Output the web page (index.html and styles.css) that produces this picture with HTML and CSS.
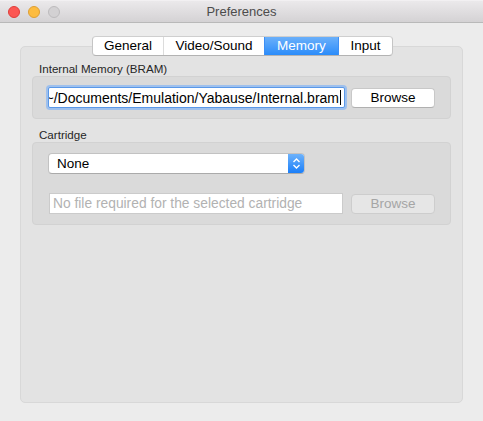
FILE: index.html
```html
<!DOCTYPE html>
<html>
<head>
<meta charset="utf-8">
<title>Preferences</title>
<link rel="stylesheet" href="styles.css">
</head>
<body>
<div class="window">
  <div class="titlebar">
    <div class="lights">
      <span class="light close"></span>
      <span class="light minimize"></span>
      <span class="light zoom"></span>
    </div>
    <div class="title">Preferences</div>
  </div>

  <div class="body">
    <div class="tabs">
      <div class="tab t-general">General</div>
      <div class="tab t-video">Video/Sound</div>
      <div class="tab t-memory active">Memory</div>
      <div class="tab t-input">Input</div>
    </div>

    <div class="panel">
      <div class="group-label">Internal Memory (BRAM)</div>
      <div class="group group-bram">
        <div class="field focused">
          <div class="field-scroll"><span>~/Documents/Emulation/Yabause/Internal.bram</span><span class="caret"></span></div>
        </div>
        <button class="btn">Browse</button>
      </div>

      <div class="group-label">Cartridge</div>
      <div class="group group-cart">
        <div class="popup">
          <span class="popup-value">None</span>
          <span class="popup-arrows">
            <svg width="9" height="13" viewBox="0 0 9 13"><path d="M1.5 5 L4.5 2 L7.5 5 M1.5 8 L4.5 11 L7.5 8" fill="none" stroke="#fff" stroke-width="1.4"/></svg>
          </span>
        </div>
        <div class="row">
          <div class="field disabled"><span class="placeholder">No file required for the selected cartridge</span></div>
          <button class="btn" disabled>Browse</button>
        </div>
      </div>
    </div>
  </div>
</div>
</body>
</html>
```

FILE: styles.css
```css
* { box-sizing: border-box; }

html, body {
  margin: 0;
  padding: 0;
}

body {
  width: 483px;
  height: 421px;
  overflow: hidden;
  background: #ececec;
  font-family: "Liberation Sans", Arial, sans-serif;
  color: #000;
}

.window {
  width: 483px;
  height: 421px;
  background: #ececec;
  display: flex;
  flex-direction: column;
}

/* title bar */
.titlebar {
  height: 23px;
  flex: none;
  display: flex;
  align-items: center;
  position: relative;
  background: linear-gradient(#ebe9eb, #d4d2d4);
  border-top: 1px solid #f2f0f2;
  border-bottom: 1px solid #b9b9b9;
}

.lights {
  display: flex;
  gap: 8px;
  padding-left: 8px;
  align-items: center;
}

.light {
  width: 12px;
  height: 12px;
  border-radius: 50%;
  display: block;
}

.close { background: #fc5753; border: 1px solid #df3e3a; }
.minimize { background: #fdbc40; border: 1px solid #de9f34; }
.zoom { background: #d3d1d3; border: 1px solid #bdbbbd; }

.title {
  position: absolute;
  left: 0;
  right: 0;
  top: 3px;
  text-align: center;
  font-size: 13px;
  color: #4c4c4c;
}

/* window body */
.body {
  flex: 1;
  display: flex;
  flex-direction: column;
  padding: 13px 20px 18px 20px;
}

.tabs {
  align-self: center;
  margin-left: 2px;
  display: flex;
  height: 20px;
  background: #fff;
  border: 1px solid #c5c5c5;
  border-top-color: #cfcfcf;
  border-bottom-color: #b3b3b3;
  border-radius: 4px;
  overflow: hidden;
  position: relative;
  z-index: 1;
  margin-bottom: -10px;
  font-size: 13.5px;
}

.tab {
  display: flex;
  align-items: center;
  justify-content: center;
  border-left: 1px solid #dcdcdc;
  padding-bottom: 1px;
}

.tab:first-child { border-left: 0; }

.t-general { width: 70px; }
.t-video { width: 101px; }
.t-memory { width: 74px; }
.t-input { width: 54px; }

.tab.active {
  background: linear-gradient(#6bb0fa, #2b8cfa);
  color: #fff;
  border-left-color: #3d8ff5;
}

.tab.active + .tab { border-left-color: #3d8ff5; }

.panel {
  flex: 1;
  background: #e3e3e3;
  border: 1px solid #d8d8d8;
  border-radius: 5px;
  padding: 15px 11px 0 11px;
  display: flex;
  flex-direction: column;
}

.group-label {
  font-size: 11.6px;
  color: #262626;
  padding-left: 7px;
  height: 14px;
  line-height: 14px;
}

.group {
  background: #dadada;
  border: 1px solid #d2d2d2;
  border-radius: 4px;
}

.group-bram {
  height: 43px;
  display: flex;
  align-items: center;
  padding: 0 15px 0 14px;
  gap: 6px;
  margin-bottom: 9px;
}

.field {
  height: 21px;
  background: #fff;
  border: 1px solid #bdbdbd;
  border-top-color: #a9a9a9;
  font-size: 13.8px;
  display: flex;
  align-items: center;
  overflow: hidden;
}

.field.focused {
  width: 298px;
  border: 1px solid #5a98e8;
  box-shadow: 0 0 0 2px #9ec0ed;
  border-radius: 2px;
  margin-left: 1px;
  font-size: 14px;
}

.field-scroll {
  flex: 1;
  display: flex;
  justify-content: flex-end;
  align-items: center;
  white-space: nowrap;
  overflow: hidden;
  padding-right: 3px;
}

.caret {
  display: inline-block;
  width: 1px;
  height: 15px;
  background: #000;
  margin-left: 1px;
  flex: none;
}

.btn {
  width: 84px;
  height: 20px;
  padding: 0 0 1px 0;
  margin: 0;
  background: #fff;
  border: 1px solid #c8c8c8;
  border-bottom-color: #b0b0b0;
  border-radius: 4px;
  font-family: "Liberation Sans", Arial, sans-serif;
  font-size: 13.5px;
  color: #000;
  flex: none;
}

.btn:disabled {
  background: #e6e6e6;
  border-color: #cdcdcd;
  color: #a5a5a5;
}

.group-cart {
  height: 83px;
  padding: 10px 15px 0 14px;
  display: flex;
  flex-direction: column;
}

.popup {
  width: 257px;
  height: 21px;
  margin-left: 1px;
  display: flex;
  background: #fff;
  border: 1px solid #c2c2c2;
  border-bottom-color: #aaa;
  border-radius: 4px;
  overflow: hidden;
  font-size: 13.5px;
}

.popup-value {
  flex: 1;
  padding-left: 8px;
  line-height: 19px;
}

.popup-arrows {
  width: 16px;
  display: flex;
  align-items: center;
  justify-content: center;
  background: linear-gradient(#6db2fb, #1b7ff9);
}

.row {
  display: flex;
  align-items: center;
  gap: 8px;
  margin-top: 19px;
}

.field.disabled {
  width: 296px;
  margin-left: 2px;
  border-color: #cbcbcb;
  padding-left: 3px;
}

.placeholder {
  color: #b2b2b2;
  white-space: nowrap;
}
```
